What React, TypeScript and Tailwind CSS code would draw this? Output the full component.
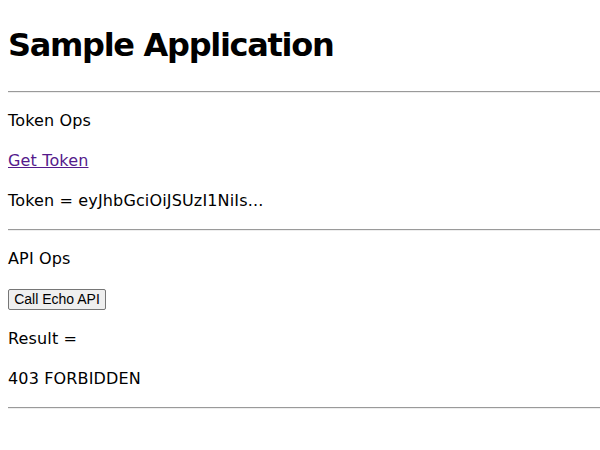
import React from "react";

const font = { fontFamily: '"DejaVu Sans", "Noto Sans CJK JP", sans-serif' };

function Rule() {
    return <hr className="ml-2 border-0 border-t border-b border-t-[#9a9a9a] border-b-[#eeeeee] h-0" />;
}

export default function App() {
    return (
        <div className="bg-white text-black min-h-[450px] pt-px tracking-[0.15px]" style={font}>
            <h1 className="mx-2 mt-[20px] mb-[22px] text-[32px] font-bold leading-[48px] tracking-[-1.3px]">Sample Application</h1>
            <Rule />
            <p className="mx-2 mt-4 leading-6 text-base">Token Ops</p>
            <p className="mx-2 mt-4 leading-6 text-base">
                <a href="#" className="text-[#551a8b] underline">Get Token</a>
            </p>
            <p className="mx-2 mt-4 mb-4 leading-6 text-base">Token = eyJhbGciOiJSUzI1NiIs...</p>
            <Rule />
            <p className="mx-2 mt-4 leading-6 text-base">API Ops</p>
            <div className="mx-2 mt-4 h-6 flex items-center">
                <button className="w-[98px] h-[21px] text-[14px] tracking-normal leading-none border border-[#767676] rounded-[2px] bg-[#efefef] font-['Liberation_Sans',Arial,sans-serif]">Call Echo API</button>
            </div>
            <p className="mx-2 mt-4 leading-6 text-base">Result =</p>
            <p className="mx-2 mt-4 mb-4 leading-6 text-base">403 FORBIDDEN</p>
            <Rule />
        </div>
    );
}
